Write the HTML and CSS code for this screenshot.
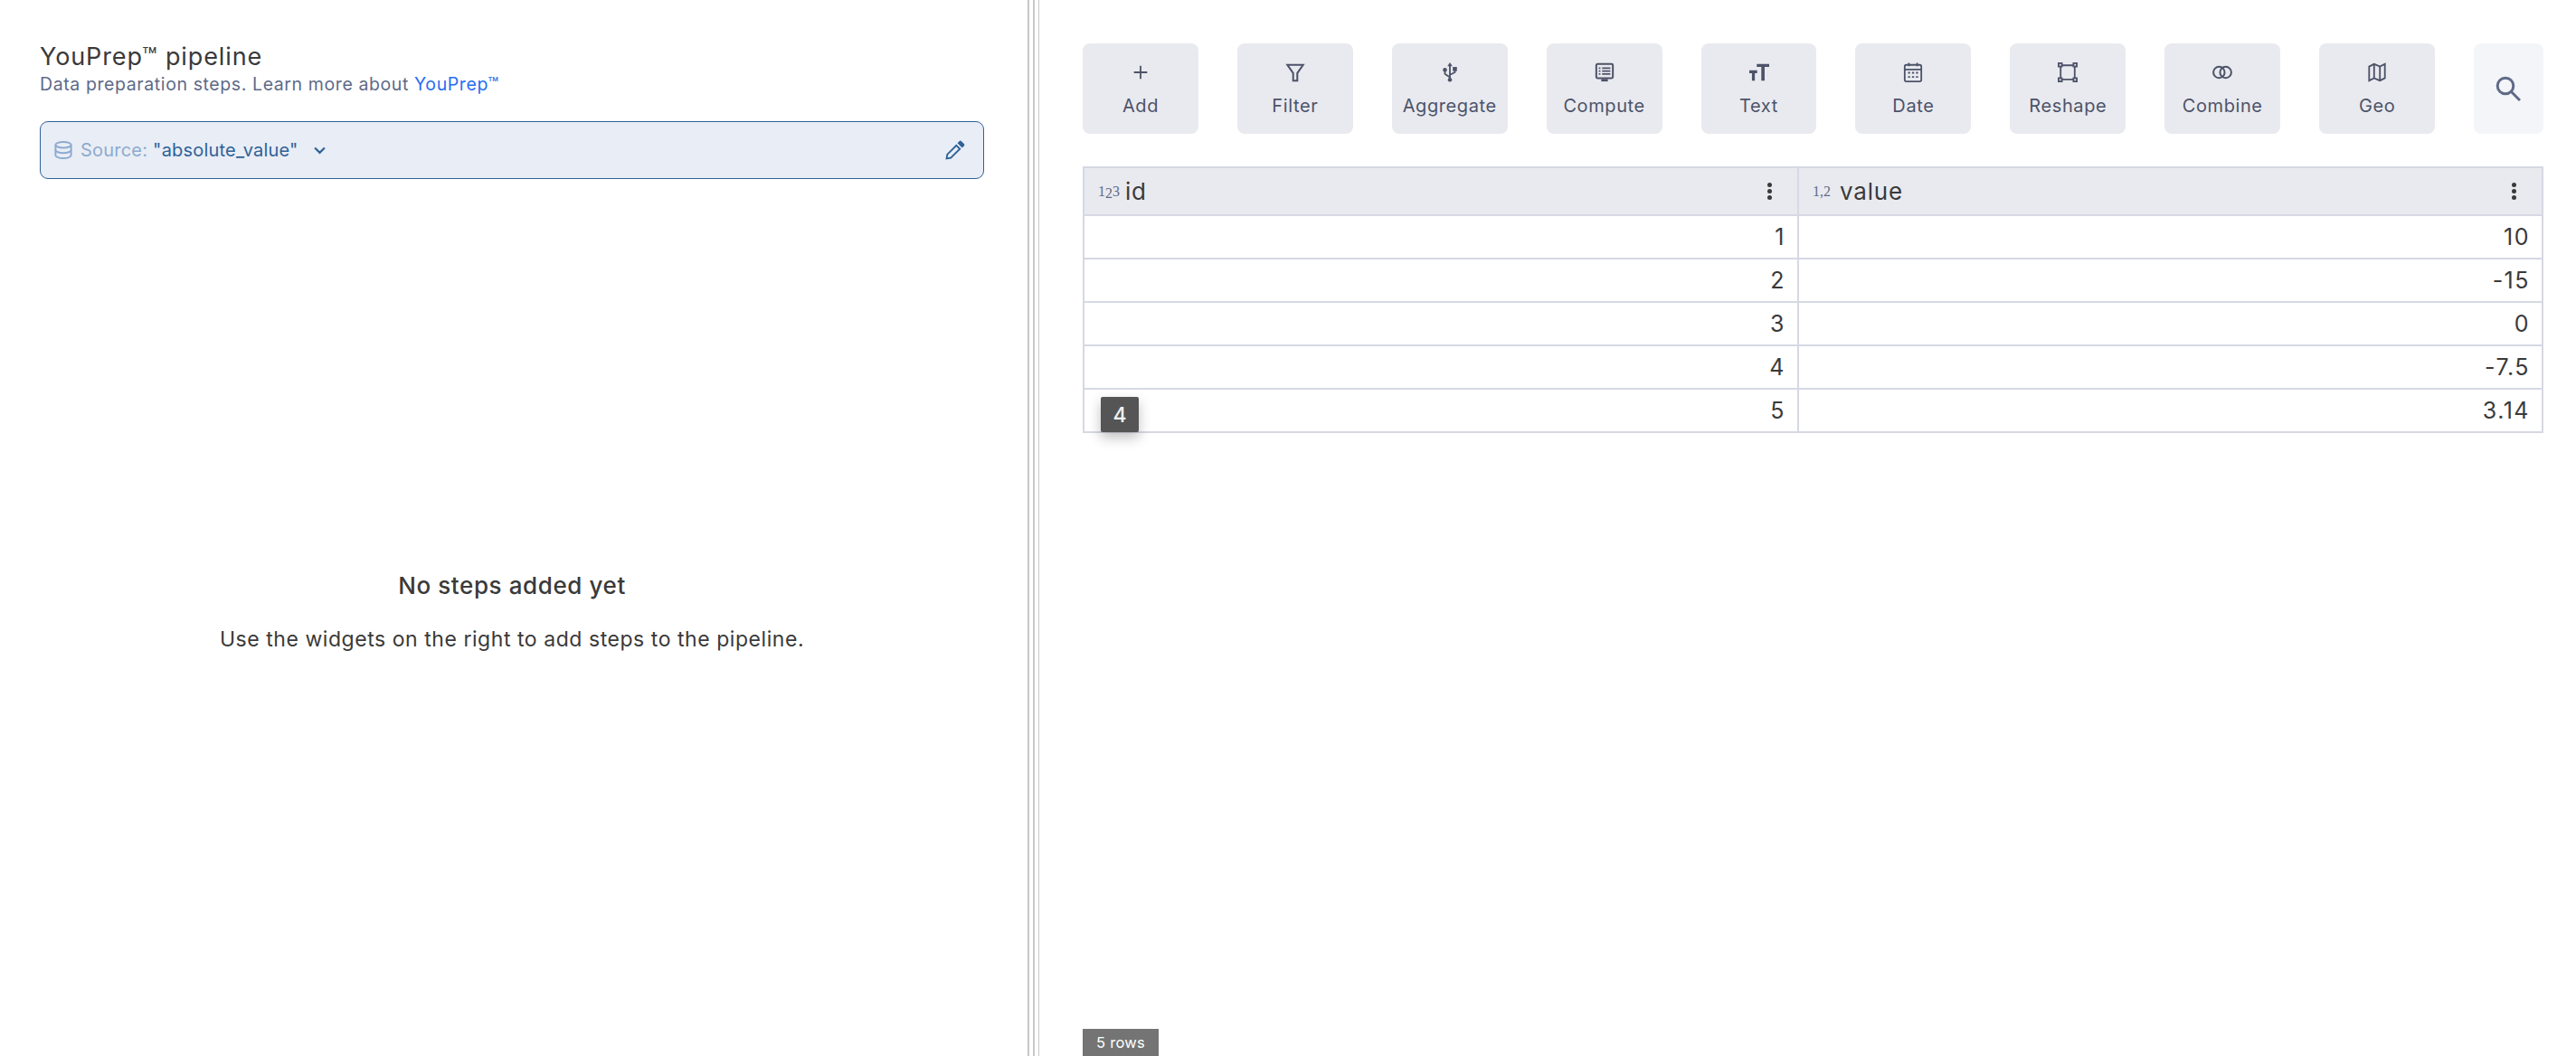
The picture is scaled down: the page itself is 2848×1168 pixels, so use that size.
FILE: index.html
```html
<!DOCTYPE html>
<html lang="en">
<head>
    <meta charset="UTF-8">
    <meta name="viewport" content="width=device-width, initial-scale=1.0">
    <title>YouPrep pipeline</title>
    <link rel="stylesheet" href="styles.css">
</head>
<body>
    <div class="app">
        <section class="pipeline">
            <h1 class="pipeline-title">YouPrep™ pipeline</h1>
            <p class="pipeline-sub">Data preparation steps. Learn more about <a href="#">YouPrep™</a></p>

            <div class="source">
                <svg class="source-db" viewBox="0 0 20 20" fill="none" stroke="currentColor" stroke-width="2">
                    <ellipse cx="10" cy="4.2" rx="8.6" ry="3.2"/>
                    <path d="M1.4 4.2v11.6c0 1.8 3.9 3.2 8.6 3.2s8.6-1.4 8.6-3.2V4.2"/>
                    <path d="M1.4 10c0 1.8 3.9 3.2 8.6 3.2s8.6-1.4 8.6-3.2"/>
                </svg>
                <span class="source-label">Source:</span>
                <span class="source-name">"absolute_value"</span>
                <svg class="source-chevron" viewBox="0 0 12 8" fill="none" stroke="currentColor" stroke-width="2">
                    <path d="M1 1.2l5 5 5-5"/>
                </svg>
                <svg class="source-edit" viewBox="0 0 22 22" fill="currentColor">
                    <path d="M15.6 1.2a1.6 1.6 0 0 1 2.3 0l2.9 2.9a1.6 1.6 0 0 1 0 2.3l-2.1 2.1-5.2-5.2z"/>
                    <path fill-rule="evenodd" d="M12.3 4.5l5.2 5.2L6.6 20.6.4 21.6l1-6.2zM12.3 7.2L3.2 16.3l-.5 3 3-.5 9.1-9.1z"/>
                </svg>
            </div>

            <div class="empty">
                <h2 class="empty-title">No steps added yet</h2>
                <p class="empty-text">Use the widgets on the right to add steps to the pipeline.</p>
            </div>
        </section>

        <div class="splitter"></div>

        <section class="dataset">
            <div class="toolbar">
                <button class="tool">
                    <svg viewBox="0 0 24 24" fill="none" stroke="currentColor" stroke-width="2"><path d="M12 4v16M4 12h16"/></svg>
                    <span>Add</span>
                </button>
                <button class="tool">
                    <svg viewBox="0 0 24 24" fill="none" stroke="currentColor" stroke-width="2.2"><path d="M2.5 3h19l-7 10v9h-5v-9z"/></svg>
                    <span>Filter</span>
                </button>
                <button class="tool">
                    <svg viewBox="0 0 24 24" fill="none" stroke="currentColor" stroke-width="2">
                        <path d="M12 4v16M12 18l-6-4v-3M12 15l6-3V9"/>
                        <path d="M12 0l3 4.500H9z" fill="currentColor" stroke="none"/>
                        <circle cx="6" cy="9" r="2.500" fill="currentColor" stroke="none"/>
                        <rect x="15.500" y="5.500" width="5" height="5" fill="currentColor" stroke="none"/>
                        <circle cx="12" cy="21" r="2.500" fill="currentColor" stroke="none"/>
                    </svg>
                    <span>Aggregate</span>
                </button>
                <button class="tool">
                    <svg viewBox="0 0 24 24" fill="none" stroke="currentColor" stroke-width="2.2">
                        <rect x="2" y="2" width="20" height="17" rx="1.500"/>
                        <path d="M9 7h10M9 10.500h10M9 14h10M5 7h2M5 10.500h2M5 14h2" stroke-width="1.800"/>
                        <path d="M8 21.500h8" stroke-width="3"/>
                    </svg>
                    <span>Compute</span>
                </button>
                <button class="tool">
                    <svg viewBox="0 0 24 24" fill="currentColor">
                        <path d="M9 2h15v3.500h-5.500V22h-4V5.500H9z"/>
                        <path d="M0 9.500h9.500V13H6.700v9H3.200v-9H0z"/>
                    </svg>
                    <span>Text</span>
                </button>
                <button class="tool">
                    <svg viewBox="0 0 24 24" fill="none" stroke="currentColor" stroke-width="2">
                        <rect x="2" y="3" width="20" height="20" rx="2"/>
                        <path d="M2 8.500h20M7 .5v4M17 .5v4"/>
                        <path d="M6 12.500h2.500M10.800 12.500h2.500M15.600 12.500h2.500M6 17.500h2.500M10.800 17.500h2.500M15.600 17.500h2.500" stroke-width="2"/>
                    </svg>
                    <span>Date</span>
                </button>
                <button class="tool">
                    <svg viewBox="0 0 24 24" fill="none" stroke="currentColor" stroke-width="2">
                        <path d="M5 3.500h14M5 20.500h14M3.500 5v14M20.500 5v14"/>
                        <rect x="1" y="1" width="4" height="4"/>
                        <rect x="19" y="1" width="4" height="4"/>
                        <rect x="1" y="19" width="4" height="4"/>
                        <rect x="19" y="19" width="4" height="4"/>
                    </svg>
                    <span>Reshape</span>
                </button>
                <button class="tool">
                    <svg viewBox="0 0 24 24" fill="none" stroke="currentColor" stroke-width="2.200">
                        <circle cx="8" cy="12" r="6.800"/>
                        <circle cx="16" cy="12" r="6.800"/>
                    </svg>
                    <span>Combine</span>
                </button>
                <button class="tool">
                    <svg viewBox="0 0 24 24" fill="none" stroke="currentColor" stroke-width="2">
                        <path d="M2.500 5l6-3 7 3 6-3v17l-6 3-7-3-6 3z"/>
                        <path d="M8.500 2v17M15.500 5v17"/>
                    </svg>
                    <span>Geo</span>
                </button>
                <button class="search">
                    <svg viewBox="0 0 28 28" fill="none" stroke="currentColor" stroke-width="3">
                        <circle cx="11" cy="11" r="8.800"/>
                        <path d="M17.500 17.500L27 27"/>
                    </svg>
                </button>
            </div>

            <div class="table-wrap">
                <table class="data">
                    <thead>
                        <tr>
                            <th>
                                <div class="col">
                                    <span class="col-type"><i>1</i><i class="low">2</i><i>3</i></span>
                                    <span class="col-name">id</span>
                                    <span class="col-menu"></span>
                                </div>
                            </th>
                            <th>
                                <div class="col">
                                    <span class="col-type">1,2</span>
                                    <span class="col-name">value</span>
                                    <span class="col-menu"></span>
                                </div>
                            </th>
                        </tr>
                    </thead>
                    <tbody>
                        <tr><td>1</td><td>10</td></tr>
                        <tr><td>2</td><td>-15</td></tr>
                        <tr><td>3</td><td>0</td></tr>
                        <tr><td>4</td><td>-7.5</td></tr>
                        <tr><td>5</td><td>3.14</td></tr>
                    </tbody>
                </table>
                <div class="row-tip">4</div>
            </div>

            <div class="row-count">5 rows</div>
        </section>
    </div>
</body>
</html>
```

FILE: styles.css
```css
:root {
    --text-color: #3a3a3a;
    --muted-color: #5e6a87;
    --tool-color: #4d5369;
    --tool-bg: #e9eaef;
    --line-color: #d6d8e3;
    --source-color: #2f6299;
}

* {
    margin: 0;
    padding: 0;
    box-sizing: border-box;
}

body {
    background: #fff;
    color: var(--text-color);
    font-family: Inter, 'Noto Sans', sans-serif;
    height: 1168px;
    overflow: hidden;
}

.app {
    display: flex;
    height: 100%;
}

/* left side */
.pipeline {
    width: 1136px;
    padding: 47px 48px 0 44px;
    display: flex;
    flex-direction: column;
}

.pipeline-title {
    font-size: 27px;
    font-weight: 400;
    line-height: 32px;
    letter-spacing: 0.9px;
}

.pipeline-sub {
    font-size: 19.500px;
    line-height: 28px;
    letter-spacing: 0.6px;
    color: var(--muted-color);
}

.pipeline-sub a {
    color: #2a6df0;
    text-decoration: none;
}

.source {
    margin-top: 27px;
    height: 64px;
    background: #e9edf5;
    border: 1.500px solid var(--source-color);
    border-radius: 9px;
    display: flex;
    align-items: center;
    padding: 0 20px 0 15px;
    color: var(--source-color);
    font-size: 20px;
    letter-spacing: 0.2px;
}

.source-db {
    width: 20px;
    height: 20px;
    color: #8dabd0;
    margin-right: 9px;
}

.source-label {
    color: #8dabd0;
    margin-right: 6px;
}

.source-chevron {
    width: 13px;
    height: 9px;
    margin-left: 17px;
}

.source-edit {
    width: 22px;
    height: 22px;
    margin-left: auto;
}

.empty {
    flex: 1;
    display: flex;
    flex-direction: column;
    align-items: center;
    justify-content: center;
    padding-bottom: 12px;
}

.empty-title {
    font-size: 26px;
    font-weight: 500;
    line-height: 32px;
    letter-spacing: 0.6px;
    margin-bottom: 27px;
}

.empty-text {
    font-size: 23px;
    line-height: 32px;
    letter-spacing: 0.55px;
}

.splitter {
    width: 14px;
    background: linear-gradient(90deg,
        #c8c8c8 0, #c8c8c8 2px, #fff 2px, #fff 6px,
        #c8c8c8 6px, #c8c8c8 8px, #fff 8px, #fff 12px,
        #c8c8c8 12px, #c8c8c8 13px, #fff 13px);
}

/* right side */
.dataset {
    flex: 1;
    padding: 48px 36px 0 47px;
    display: flex;
    flex-direction: column;
    min-width: 0;
}

.toolbar {
    display: flex;
    gap: 43px;
}

.tool {
    width: 128px;
    height: 100px;
    background: var(--tool-bg);
    border: none;
    border-radius: 8px;
    color: var(--tool-color);
    font-family: inherit;
    font-size: 20px;
    letter-spacing: 0.6px;
    display: flex;
    flex-direction: column;
    align-items: center;
    padding-top: 21px;
}

.tool svg {
    width: 22px;
    height: 22px;
}

.tool span {
    margin-top: 14px;
    line-height: 24px;
}

.search {
    width: 77px;
    height: 100px;
    background: #f4f5f8;
    border: none;
    border-radius: 8px;
    color: #5e6a87;
    display: flex;
    align-items: center;
    justify-content: center;
}

.search svg {
    width: 28px;
    height: 28px;
}

.table-wrap {
    position: relative;
    margin-top: 36px;
}

.data {
    width: 100%;
    border-collapse: collapse;
    table-layout: fixed;
    font-size: 25px;
    letter-spacing: 1.5px;
}

.data th {
    height: 53px;
    background: var(--tool-bg);
    border: 2px solid var(--line-color);
    font-weight: 400;
    padding: 0 15px;
}

.data th:first-child {
    width: 790px;
}

.data td {
    height: 48px;
    border: 2px solid var(--line-color);
    text-align: right;
    padding: 0 13px;
}

.col {
    display: flex;
    align-items: center;
}

.col-type {
    font-family: 'Liberation Serif', serif;
    font-size: 16px;
    color: var(--muted-color);
    letter-spacing: 0;
    width: 30px;
    text-align: left;
    white-space: nowrap;
}

.col-type i {
    font-style: normal;
}

.col-type .low {
    position: relative;
    top: 2px;
}

.col-name {
    font-size: 26px;
    letter-spacing: 0.8px;
}

.col-menu {
    margin-left: auto;
    width: 5px;
    height: 5px;
    border-radius: 50%;
    background: #3a3a3a;
    box-shadow: 0 -7px 0 #3a3a3a, 0 7px 0 #3a3a3a;
    margin-right: 13px;
}

.row-tip {
    position: absolute;
    left: 20px;
    top: 255px;
    width: 42px;
    height: 39px;
    background: #555;
    border-radius: 2px;
    color: #f2f2f2;
    font-size: 23px;
    font-weight: 500;
    display: flex;
    align-items: center;
    justify-content: center;
    box-shadow: 0 6px 14px rgba(0, 0, 0, 0.25);
}

.row-count {
    margin-top: auto;
    width: 84px;
    height: 30px;
    background: #747474;
    color: #fff;
    font-size: 16.500px;
    letter-spacing: 0.3px;
    display: flex;
    align-items: center;
    justify-content: center;
}
```
